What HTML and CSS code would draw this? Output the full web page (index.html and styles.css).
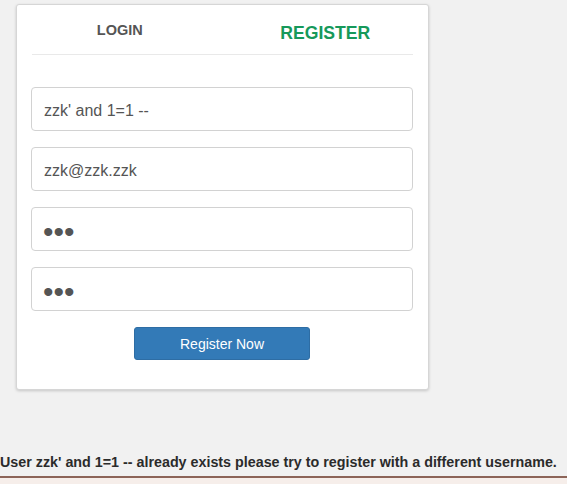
FILE: index.html
```html
<!DOCTYPE html>
<html>
<head>
<meta charset="utf-8">
<link rel="stylesheet" href="styles.css">
</head>
<body>
<div class="card">
  <div class="tabs">
    <div class="tab tab-login">LOGIN</div>
    <div class="tab tab-register">REGISTER</div>
  </div>
  <form class="form">
    <input class="field" type="text" value="zzk' and 1=1 --">
    <input class="field" type="text" value="zzk@zzk.zzk">
    <input class="field field-pass" type="password" value="abc">
    <input class="field field-pass" type="password" value="abc">
    <button class="btn" type="button">Register Now</button>
  </form>
</div>
<div class="message">User zzk' and 1=1 -- already exists please try to register with a different username.</div>
<div class="footer-bar"></div>
</body>
</html>
```
FILE: styles.css
```css
html, body {
  margin: 0;
  padding: 0;
  background: #f1f1f1;
  font-family: "Liberation Sans", Arial, sans-serif;
  height: 484px;
  overflow: hidden;
}
.card {
  box-sizing: border-box;
  width: 413px;
  margin: 4px 0 0 16px;
  background: #fff;
  border: 1px solid #d6d6d6;
  border-radius: 3px;
  box-shadow: 0 1px 3px rgba(0,0,0,0.18);
  padding: 0 0 29px 0;
}
.tabs {
  display: flex;
  height: 49px;
  margin: 0 0 32px 0;
  background-image: linear-gradient(#e9e9e9, #e9e9e9);
  background-size: calc(100% - 30px) 1px;
  background-position: center bottom;
  background-repeat: no-repeat;
  padding-bottom: 1px;
}
.tab {
  flex: 1;
  display: flex;
  align-items: center;
  justify-content: center;
  font-weight: bold;
}
.tab-login {
  color: #555;
  font-size: 14.5px;
}
.tab-register {
  color: #16995a;
  font-size: 17.6px;
  padding-top: 8px;
}
.form {
  display: flex;
  flex-direction: column;
  gap: 16px;
  margin: 0;
  padding: 0 15px 0 14px;
}
.field {
  box-sizing: border-box;
  height: 44px;
  width: 100%;
  border: 1px solid #d2d2d2;
  border-radius: 4px;
  padding: 4px 12px 0 12px;
  font-family: "Liberation Sans", Arial, sans-serif;
  font-size: 16px;
  color: #555;
  background: #fff;
  outline: none;
}
.field-pass {
  font-size: 30px;
  padding: 6px 11px 0 11px;
}
.btn {
  align-self: center;
  width: 176px;
  height: 33px;
  background: #337ab7;
  border: 1px solid #2e6da4;
  border-radius: 3px;
  color: #fff;
  font-family: "Liberation Sans", Arial, sans-serif;
  font-size: 14px;
}
.message {
  margin-top: 64px;
  font-weight: bold;
  font-size: 14.3px;
  color: #2b2b2b;
  line-height: 17px;
}
.footer-bar {
  margin-top: 5px;
  height: 8px;
  border-top: 2px solid #8c6458;
  background: #f6eeea;
}
```
